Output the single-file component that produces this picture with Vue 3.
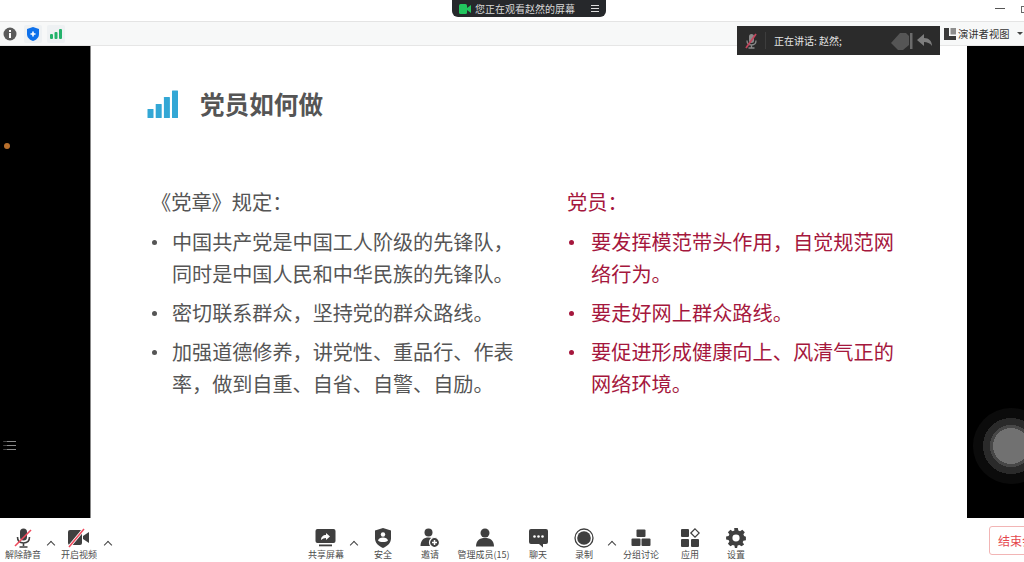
<template>
  <div class="window">
    <div class="titlebar">
      <span class="win-min"></span>
      <span class="win-max"></span>
    </div>

    <div class="infobar">
      <span class="chip">
        <svg width="14" height="14" viewBox="0 0 14 14"><circle cx="7" cy="7" r="6.5" fill="#5b5b5b" /><rect x="6" y="6" width="2" height="5" fill="#fff" /><rect x="6" y="3" width="2" height="2" fill="#fff" /></svg>
      </span>
      <span class="chip boxed">
        <svg width="12" height="14" viewBox="0 0 12 14"><path d="M6 0 12 2v5c0 3.500-2.500 5.800-6 7-3.500-1.200-6-3.500-6-7V2z" fill="#0e71eb" /><path d="M5.200 4.500h1.600v1.700h1.700v1.600H6.800v1.700H5.200V7.800H3.500V6.200h1.700z" fill="#fff" /></svg>
      </span>
      <span class="chip boxed">
        <svg width="12" height="10" viewBox="0 0 12 10"><rect x="0" y="5" width="3" height="5" rx="1" fill="#23b26b" /><rect x="4.500" y="3" width="3" height="7" rx="1" fill="#23b26b" /><rect x="9" y="0" width="3" height="10" rx="1" fill="#23b26b" /></svg>
      </span>
      <div class="presenter">
        <svg width="12" height="12" viewBox="0 0 12 12"><path d="M0 0h5v8h7v4H0z" fill="#3a3a3a" /><rect x="6.500" y="0" width="5.500" height="6.500" fill="#8d8d8d" /></svg>
        <span>演讲者视图</span>
        <i class="tri"></i>
      </div>
    </div>

    <div class="stage">
      <div class="side side-left">
        <span class="cursor-dot"></span>
        <span class="list-mark">
          <i></i><i></i><i></i>
        </span>
      </div>

      <div class="slide">
        <div class="slide-head">
          <svg class="head-icon" width="32" height="28" viewBox="0 0 32 28">
            <rect x="0.500" y="19" width="6" height="9" rx="0.500" />
            <rect x="8.700" y="14" width="6" height="14" rx="0.500" />
            <rect x="16.900" y="7" width="6" height="21" rx="0.500" />
            <rect x="25" y="0.500" width="6" height="27.500" rx="0.500" />
          </svg>
          <h1>党员如何做</h1>
        </div>

        <div class="columns">
          <div class="col col-left">
            <p class="col-title">《党章》规定：</p>
            <ul>
              <li v-for="t in leftItems" :key="t">{{ t }}</li>
            </ul>
          </div>
          <div class="col col-right">
            <p class="col-title">党员：</p>
            <ul>
              <li v-for="t in rightItems" :key="t">{{ t }}</li>
            </ul>
          </div>
        </div>
      </div>

      <div class="side side-right">
        <span class="float-ball"></span>
      </div>

      <div class="share-pill">
        <svg width="12" height="10" viewBox="0 0 12 10"><rect x="0" y="0" width="8" height="10" rx="1.500" fill="#22c55e" /><path d="M8 4 12 1v8L8 6z" fill="#22c55e" /></svg>
        <span class="pill-text">您正在观看赵然的屏幕</span>
        <span class="pill-menu"><i></i><i></i><i></i></span>
      </div>

      <div class="talk-panel">
        <svg class="talk-mic" width="14" height="16" viewBox="0 0 14 16">
          <rect x="5" y="1" width="5" height="9" rx="2.500" fill="#8a8a8a" />
          <path d="M3 7.500c0 3 2 4.500 4.500 4.500S12 10.500 12 7.500M7.500 12v2.500M4.500 15h6" fill="none" stroke="#8a8a8a" stroke-width="1.300" />
          <path d="M2 15 12 1" stroke="#c2455c" stroke-width="1.800" />
        </svg>
        <span class="talk-sep"></span>
        <span class="talk-text">正在讲话: 赵然;</span>
        <svg class="talk-tools" width="44" height="20" viewBox="0 0 44 20">
          <path d="M0 12 9 2h6l3 3v9l-6 5H7z" fill="#555" />
          <path d="M19 2h2.500v16H19z" fill="#6b6b6b" />
          <path d="M33 3 26 9l7 6v-4c3 0 6 1 8 4 0-5-3-8-8-8z" fill="#7d7d7d" />
        </svg>
      </div>
    </div>

    <div class="toolbar">
      <div class="tool-group group-left">
        <div class="tool">
          <svg width="20" height="20" viewBox="0 0 20 20">
            <rect x="7" y="0.500" width="7" height="12" rx="3.500" fill="#3f3f3f" />
            <path d="M4.500 9c0 4 2.500 6 6 6s6-2 6-6M10.500 15v3M6.500 19h8" fill="none" stroke="#3f3f3f" stroke-width="1.600" />
            <path d="M2 18 18 2" stroke="#ef4a5c" stroke-width="1.600" />
          </svg>
          <span>解除静音</span>
        </div>
        <i class="caret"></i>
        <div class="tool">
          <svg width="21" height="20" viewBox="0 0 21 20">
            <rect x="0" y="2" width="14" height="15" rx="2" fill="#3f3f3f" />
            <path d="M15 8 21 4v11l-6-4z" fill="#3f3f3f" />
            <path d="M1 19 16 1" stroke="#fff" stroke-width="3" />
            <path d="M1 19 16 1" stroke="#ef4a5c" stroke-width="1.500" />
          </svg>
          <span>开启视频</span>
        </div>
        <i class="caret"></i>
      </div>

      <div class="tool-group group-center">
        <div class="tool">
          <svg width="21" height="20" viewBox="0 0 21 20">
            <rect x="0.500" y="1" width="20" height="14" rx="2" fill="#3f3f3f" />
            <path d="M6 12c0-3 2-5 5-5V5l4 3.500L11 12v-2c-2 0-3.500.7-5 2z" fill="#fff" />
            <rect x="4" y="16.500" width="13" height="1.800" fill="#3f3f3f" />
          </svg>
          <span>共享屏幕</span>
        </div>
        <i class="caret"></i>
        <div class="tool">
          <svg width="16" height="20" viewBox="0 0 16 20">
            <path d="M8 0 16 2.500v8c0 4.500-3.500 7.500-8 9.500-4.500-2-8-5-8-9.500v-8z" fill="#3f3f3f" />
            <circle cx="8" cy="6.500" r="2.200" fill="#fff" />
            <path d="M3 12.500c.5-2 2.500-3 5-3s4.500 1 5 3c-1 1-3 1.500-5 1.500s-4-.5-5-1.500z" fill="#fff" />
          </svg>
          <span>安全</span>
        </div>
        <div class="tool">
          <svg width="20" height="20" viewBox="0 0 20 20">
            <circle cx="8.500" cy="4.500" r="4" fill="#3f3f3f" />
            <path d="M0.500 18c0-6 3.500-8.500 8-8.500 3 0 5.500 1.200 7 3.500l-3 5z" fill="#3f3f3f" />
            <circle cx="14.500" cy="14.500" r="5" fill="#3f3f3f" stroke="#fff" stroke-width="1.200" />
            <path d="M14.500 12v5M12 14.500h5" stroke="#fff" stroke-width="1.500" />
          </svg>
          <span>邀请</span>
        </div>
        <div class="tool members">
          <svg width="20" height="20" viewBox="0 0 20 20">
            <circle cx="10" cy="5" r="4.500" fill="#3f3f3f" />
            <path d="M1 18.500c0-6 3.500-8.500 9-8.500s9 2.500 9 8.500z" fill="#3f3f3f" />
          </svg>
          <span>管理成员(15)</span>
        </div>
        <div class="tool">
          <svg width="19" height="20" viewBox="0 0 19 20">
            <path d="M2 1h15a2 2 0 0 1 2 2v11a2 2 0 0 1-2 2h-3v3.500L10 16H2a2 2 0 0 1-2-2V3a2 2 0 0 1 2-2z" fill="#3f3f3f" />
            <circle cx="5.500" cy="8.500" r="1.300" fill="#fff" /><circle cx="9.500" cy="8.500" r="1.300" fill="#fff" /><circle cx="13.500" cy="8.500" r="1.300" fill="#fff" />
          </svg>
          <span>聊天</span>
        </div>
        <div class="tool">
          <svg width="20" height="20" viewBox="0 0 20 20">
            <circle cx="10" cy="10" r="9" fill="none" stroke="#3f3f3f" stroke-width="1.300" />
            <circle cx="10" cy="10" r="6.800" fill="#3f3f3f" />
          </svg>
          <span>录制</span>
        </div>
        <i class="caret"></i>
        <div class="tool">
          <svg width="20" height="20" viewBox="0 0 20 20">
            <rect x="5.500" y="1.500" width="9" height="7.500" rx="1" fill="#3f3f3f" />
            <rect x="0.500" y="10.500" width="9" height="7.500" rx="1" fill="#3f3f3f" />
            <rect x="10.500" y="10.500" width="9" height="7.500" rx="1" fill="#3f3f3f" />
          </svg>
          <span>分组讨论</span>
        </div>
        <div class="tool">
          <svg width="20" height="20" viewBox="0 0 20 20">
            <rect x="1" y="1" width="8" height="8" rx="1" fill="#3f3f3f" />
            <rect x="1" y="11" width="8" height="8" rx="1" fill="#3f3f3f" />
            <rect x="11" y="11" width="8" height="8" rx="1" fill="#3f3f3f" />
            <path d="M15 0.800 19.200 5 15 9.200 10.800 5z" fill="#fff" stroke="#3f3f3f" stroke-width="1.200" />
          </svg>
          <span>应用</span>
        </div>
        <div class="tool">
          <svg width="20" height="20" viewBox="0 0 20 20">
            <path fill-rule="evenodd" fill="#3f3f3f" d="M8 0h4l.6 2.800 1.900.8L17 2l2.800 2.800-1.600 2.500.8 1.900 2 .8v4l-2.800.6-.8 1.900 1.600 2.500L16.200 21l-2.500-1.600-1.900.8L11.200 23H8.800l-.6-2.800-1.900-.8L3.800 21 1 18.200l1.600-2.500-.8-1.900L-1 13.200V9.800l2.800-.6.8-1.900L1 4.800 3.800 2l2.500 1.600 1.900-.8zM10 7.500a4 4 0 1 0 0 8 4 4 0 0 0 0-8z" transform="translate(1 0) scale(.9 .87)" />
          </svg>
          <span>设置</span>
        </div>
      </div>

      <button class="end-btn">结束会议</button>
    </div>
  </div>
</template>

<script setup>
const leftItems = [
  '中国共产党是中国工人阶级的先锋队，同时是中国人民和中华民族的先锋队。',
  '密切联系群众，坚持党的群众路线。',
  '加强道德修养，讲党性、重品行、作表率，做到自重、自省、自警、自励。'
]

const rightItems = [
  '要发挥模范带头作用，自觉规范网络行为。',
  '要走好网上群众路线。',
  '要促进形成健康向上、风清气正的网络环境。'
]
</script>

<style>
html,
body {
  margin: 0;
  overflow: hidden;
  background: #fff;
}
</style>

<style scoped>
.window {
  width: 1024px;
  height: 562px;
  display: flex;
  flex-direction: column;
  overflow: hidden;
  font-family: "Noto Sans CJK SC", "Noto Sans", sans-serif;
  background: #fff;
}

.titlebar {
  height: 21px;
  flex: none;
  border-bottom: 1px solid #e4e4e4;
  position: relative;
}

.win-min {
  position: absolute;
  left: 995px;
  top: 8px;
  width: 10px;
  height: 1px;
  background: #555;
}

.win-max {
  position: absolute;
  left: 1021px;
  top: 6px;
  width: 8px;
  height: 5px;
  border: 1px solid #666;
}

.infobar {
  height: 23px;
  flex: none;
  background: #f7f8f8;
  border-bottom: 1px solid #e6e6e6;
  display: flex;
  align-items: center;
  padding-left: 1px;
  gap: 5px;
}

.chip {
  width: 18px;
  height: 18px;
  display: flex;
  align-items: center;
  justify-content: center;
}

.chip.boxed {
  background: #eef1f3;
  border-radius: 2px;
}

.presenter {
  margin-left: auto;
  width: 80px;
  display: flex;
  align-items: center;
  gap: 2px;
  font-size: 10.3px;
  color: #333;
}

.tri {
  margin-left: 6px;
  border-left: 3px solid transparent;
  border-right: 3px solid transparent;
  border-top: 3px solid #444;
}

.stage {
  flex: 1;
  min-height: 0;
  display: flex;
  position: relative;
}

.side {
  flex: none;
  background: #000;
  position: relative;
}

.side-left {
  width: 91px;
  border-right: 1px solid #888;
  box-sizing: border-box;
}

.side-right {
  width: 57px;
}

.cursor-dot {
  position: absolute;
  left: 4px;
  top: 97px;
  width: 6px;
  height: 6px;
  border-radius: 50%;
  background: #b86f2c;
}

.list-mark {
  position: absolute;
  left: 3px;
  top: 395px;
  display: flex;
  flex-direction: column;
  gap: 3px;
}

.list-mark i {
  display: block;
  width: 9px;
  height: 1px;
  margin-left: 4px;
  background: #8a8a8a;
  box-shadow: -4px 0 0 -0.2px #777;
}

.float-ball {
  position: absolute;
  left: 6px;
  top: 362px;
  width: 76px;
  height: 76px;
  border-radius: 50%;
  background: radial-gradient(circle, #717171 0 18px, #474747 18px 21px, #2a2a2a 21px 28px, #0b0b0b 28px 38px);
}

.slide {
  flex: 1;
  min-width: 0;
  background: #fff;
  padding: 40px 0 0 56px;
  box-sizing: border-box;
}

.slide-head {
  height: 36px;
  display: flex;
  align-items: center;
}

.head-icon {
  flex: none;
  fill: #33a7d5;
}

.slide-head h1 {
  margin: 0 0 3px 21px;
  font-size: 24.6px;
  line-height: 36px;
  font-weight: 700;
  color: #555;
}

.columns {
  margin-top: 64px;
  display: flex;
  margin-left: 4px;
}

.col-left {
  width: 416px;
}

.col-title {
  margin: 0 0 8px;
  font-size: 20.2px;
  line-height: 32px;
}

.col ul {
  list-style: none;
  margin: 0;
  padding: 0;
  display: flex;
  flex-direction: column;
  gap: 7px;
}

.col li {
  position: relative;
  font-size: 20.2px;
  line-height: 32px;
}

.col li::before {
  content: "";
  position: absolute;
  top: 14px;
  width: 5px;
  height: 5px;
  border-radius: 50%;
  background: currentColor;
}

.col-left {
  color: #555;
}

.col-left li {
  width: 345px;
  padding-left: 21px;
  font-size: 20.1px;
}

.col-left li::before {
  left: 1px;
}

.col-right {
  color: #a5173d;
}

.col-right li {
  width: 308px;
  padding-left: 24px;
}

.col-right li::before {
  left: 2px;
}

.share-pill {
  position: absolute;
  left: 452px;
  top: -46px;
  width: 154px;
  height: 17px;
  background: #26282b;
  border-radius: 0 0 6px 6px;
  display: flex;
  align-items: center;
  padding-left: 7px;
  box-sizing: border-box;
  color: #d8d8d8;
  font-size: 10px;
}

.pill-text {
  margin-left: 4px;
}

.pill-menu {
  margin-left: 9px;
  padding-left: 7px;
  display: flex;
  flex-direction: column;
  gap: 2px;
}

.pill-menu i {
  display: block;
  width: 8px;
  height: 1px;
  background: #ddd;
}

.talk-panel {
  position: absolute;
  left: 737px;
  top: -20px;
  width: 203px;
  height: 29px;
  background: #2b2b2b;
  display: flex;
  align-items: center;
  color: #e4e4e4;
  font-size: 10px;
}

.talk-mic {
  margin-left: 7px;
}

.talk-sep {
  width: 1px;
  height: 17px;
  margin-left: 7px;
  background: #3d3d3d;
}

.talk-text {
  margin-left: 8px;
}

.talk-tools {
  margin-left: auto;
  margin-right: 5px;
}

.toolbar {
  height: 44px;
  flex: none;
  background: #fff;
  display: flex;
  align-items: flex-start;
}

.tool-group {
  display: grid;
  align-items: start;
  justify-items: center;
  flex: none;
}

.group-left {
  width: 304px;
  grid-template-columns: 46px 10px 46px 12px 190px;
}

.group-center {
  width: 454px;
  grid-template-columns: 44px 12px 46px 48px 62px 44px 48px 8px 50px 48px 44px;
}

.tool {
  height: 44px;
  padding-top: 10px;
  box-sizing: border-box;
  display: flex;
  flex-direction: column;
  align-items: center;
  color: #4d4d4d;
  font-size: 9px;
  line-height: 12px;
  white-space: nowrap;
}

.tool svg {
  display: block;
  height: 20px;
  margin-bottom: 1px;
}

.members span {
  margin-right: 3px;
}

.caret {
  display: block;
  margin-top: 24px;
  width: 5px;
  height: 5px;
  border-left: 1px solid #444;
  border-top: 1px solid #444;
  transform: rotate(45deg);
}

.end-btn {
  flex: none;
  margin: 8px 0 0 231px;
  width: 60px;
  height: 29px;
  padding: 0 0 0 8px;
  text-align: left;
  background: #fff;
  border: 1px solid #f2b5b5;
  border-radius: 3px;
  color: #e5484d;
  font-family: inherit;
  font-size: 12px;
  white-space: nowrap;
}
</style>
